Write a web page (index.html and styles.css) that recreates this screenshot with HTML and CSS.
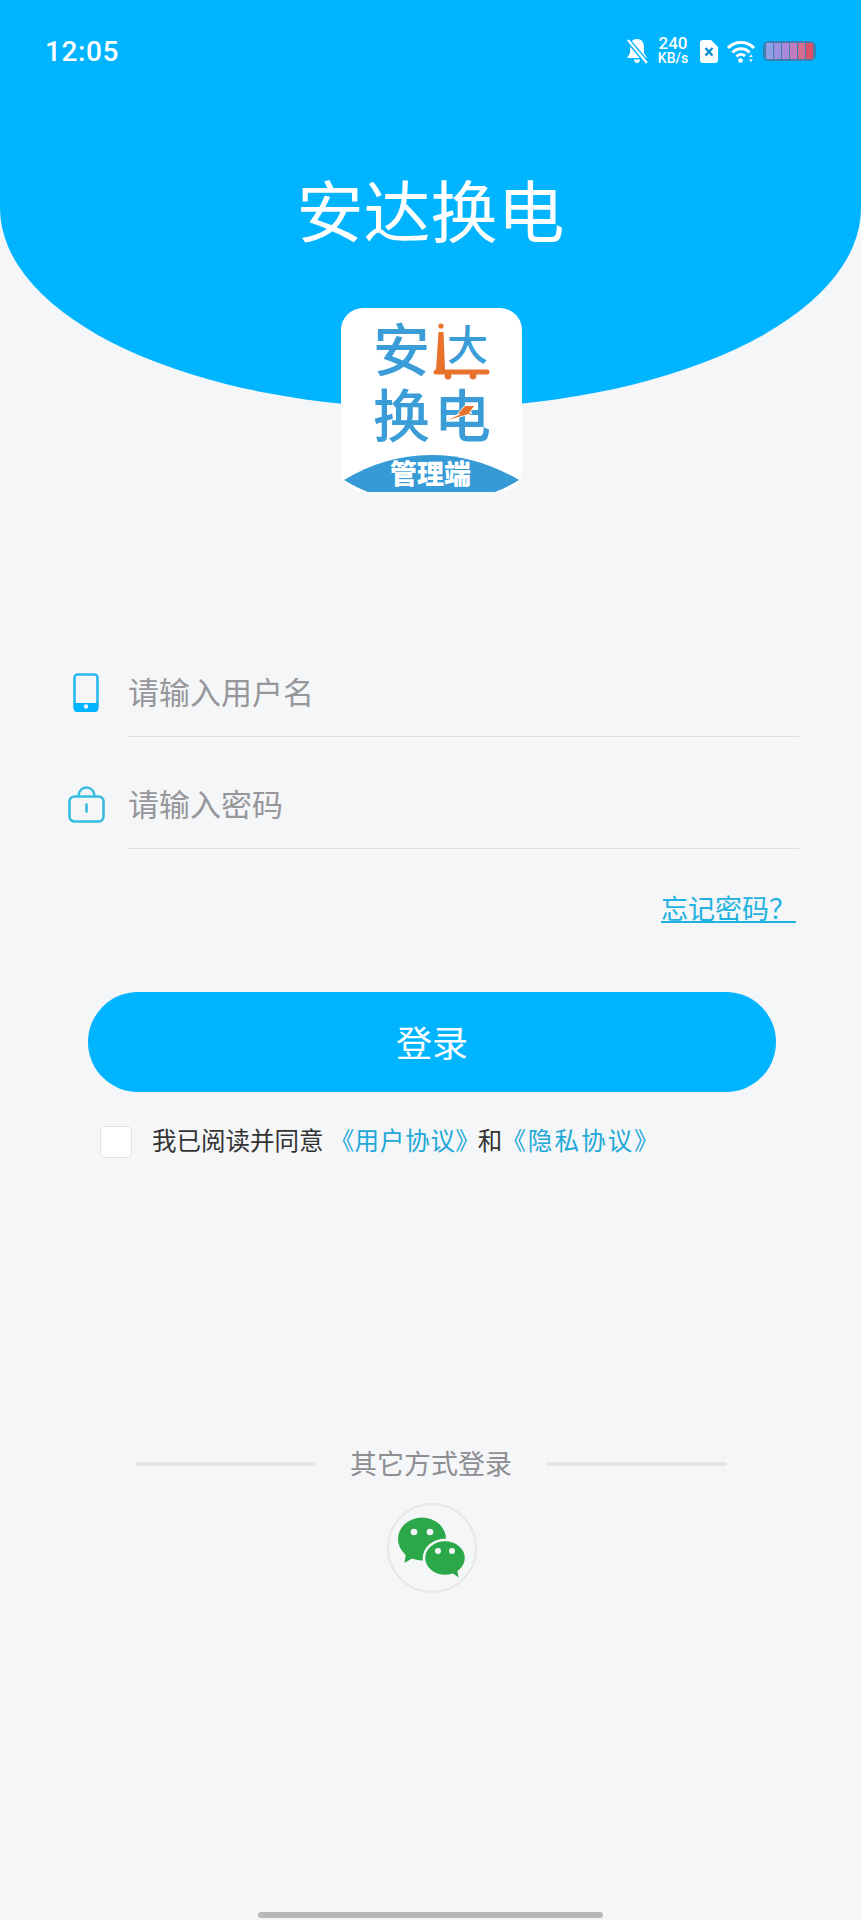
FILE: index.html
```html
<!DOCTYPE html>
<html lang="zh-CN">
<head>
    <meta charset="UTF-8">
    <meta name="viewport" content="width=device-width, initial-scale=1.0">
    <title>安达换电</title>
    <link rel="stylesheet" href="styles.css">
</head>
<body>
    <div class="header">
        <div class="status">
            <span class="time">12:05</span>
            <div class="status-icons">
                <svg class="ic-bell" width="22" height="26" viewBox="0 0 22 26">
                    <path d="M11 1c4.500 0 7 3.500 7 8v6l3 5H1l3-5V9c0-4.500 2.500-8 7-8z" fill="#fff"/>
                    <path d="M8 21.500h6c0 2-1.300 3.500-3 3.500s-3-1.500-3-3.500z" fill="#fff"/>
                    <path d="M1 1l20 24" stroke="#00b4ff" stroke-width="5"/>
                    <path d="M2 2l19 23" stroke="#fff" stroke-width="2.200"/>
                </svg>
                <div class="speed"><span>240</span><span>KB/s</span></div>
                <svg class="ic-sim" width="18" height="23" viewBox="0 0 18 23">
                    <path d="M3 0h8l7 7v13a3 3 0 0 1-3 3H3a3 3 0 0 1-3-3V3a3 3 0 0 1 3-3z" fill="#fff"/>
                    <path d="M5.500 8l7 7.500M12.500 8l-7 7.500" stroke="#0a8fd0" stroke-width="2.400"/>
                </svg>
                <svg class="ic-wifi" width="28" height="23" viewBox="0 0 28 23" fill="none" stroke="#fff" stroke-width="3">
                    <path d="M1 8c7-7.500 19-7.500 26 0"/>
                    <path d="M5.500 12.500c4.500-5 12.500-5 17 0"/>
                    <path d="M9.500 16.500c2.500-2.700 6-2.700 8.500-.5"/>
                    <circle cx="13.500" cy="20.500" r="2.300" fill="#fff" stroke="none"/>
                    <path d="M24 14.500l1.800 2.500h-3.600zM24 22l1.800-2.500h-3.600z" fill="#fff" stroke="none"/>
                </svg>
                <div class="battery">
                    <i class="cell c1"></i><i class="cell c2"></i><i class="cell c3"></i><i class="cell c4"></i><i class="cell c5"></i><i class="cell c6"></i>
                </div>
            </div>
        </div>
        <h1 class="title">安达换电</h1>
    </div>

    <div class="logo">
        <svg width="181" height="184" viewBox="0 0 181 184">
            <text class="logo-big" x="32" y="63" font-size="57">安</text>
            <text class="logo-big" x="106" y="52" font-size="41">大</text>
            <circle cx="100" cy="18" r="2.600" fill="#e8722c"/>
            <path d="M97.500 24h5l1.500 38h-9z" fill="#e8722c"/>
            <path d="M95 64h51" stroke="#e8722c" stroke-width="5" stroke-linecap="round"/>
            <circle cx="107" cy="68" r="3.400" fill="#e8722c"/>
            <circle cx="132" cy="68" r="3.400" fill="#e8722c"/>
            <text class="logo-big" x="32" y="129" font-size="57">换</text>
            <text class="logo-big" x="93" y="129" font-size="57">电</text>
            <path d="M124 98h9l-5 7h3l-24 7 13-6h-3z" fill="#e8722c" stroke="#fff" stroke-width="1.500" paint-order="stroke"/>
            <path d="M3 172C30 156 58 147 90 147s60 9 88 25c-8 5-16 9-24 12H27c-8-3-16-7-24-12z" fill="#359ad6"/>
            <text class="logo-tag" x="49" y="176" font-size="27">管理端</text>
        </svg>
    </div>

    <form class="login">
        <div class="field">
            <span class="field-icon">
                <svg width="26" height="39" viewBox="0 0 26 39">
                    <rect x="1.500" y="1.500" width="23" height="36" rx="3" fill="none" stroke="#2ab8ef" stroke-width="2.600"/>
                    <path d="M1 30h24v6a3 3 0 0 1-3 3H4a3 3 0 0 1-3-3z" fill="#00b4ff"/>
                    <circle cx="13" cy="33.500" r="2.200" fill="#f4f6f8"/>
                </svg>
            </span>
            <input class="field-input" type="text" placeholder="请输入用户名">
        </div>
        <div class="field">
            <span class="field-icon">
                <svg width="37" height="37" viewBox="0 0 37 37" fill="none" stroke="#35bce0" stroke-width="2.600">
                    <rect x="1.500" y="10.500" width="34" height="25" rx="5"/>
                    <path d="M10.500 10c.5-5.500 4-8.500 8-8.500s7.500 3 8 8.500"/>
                    <path d="M18.500 18.500v7" stroke-linecap="round"/>
                </svg>
            </span>
            <input class="field-input" type="password" placeholder="请输入密码">
        </div>

        <a class="forgot" href="#">忘记密码？</a>

        <button class="submit" type="button">登录</button>

        <label class="agree">
            <span class="check"></span>
            <span class="agree-text">我已阅读并同意<a class="doc" href="#">《用户协议》</a>和<a class="doc" href="#">《隐私协议》</a></span>
        </label>
    </form>

    <div class="other">
        <span class="other-line"></span>
        <span class="other-text">其它方式登录</span>
        <span class="other-line"></span>
    </div>

    <div class="wechat">
        <svg width="70" height="62" viewBox="0 0 70 62">
            <path d="M9 36l-1.500 10 9-5.500z" fill="#2ba84a"/>
            <ellipse cx="25" cy="22" rx="24" ry="21.500" fill="#2ba84a"/>
            <ellipse cx="48" cy="41" rx="21" ry="18" fill="#2ba84a" stroke="#f4f6f8" stroke-width="2.500"/>
            <path d="M54 55l7.500 5.500-1.500-9z" fill="#2ba84a"/>
            <circle cx="17" cy="15" r="3.300" fill="#f4f6f8"/>
            <circle cx="33" cy="15" r="3.300" fill="#f4f6f8"/>
            <circle cx="41" cy="34" r="3" fill="#f4f6f8"/>
            <circle cx="55" cy="34" r="3" fill="#f4f6f8"/>
        </svg>
    </div>

    <div class="home-bar"></div>
</body>
</html>
```

FILE: styles.css
```css
* {
    box-sizing: border-box;
}
body {
    margin: 0;
    height: 1920px;
    overflow: hidden;
    display: flex;
    flex-direction: column;
    background-color: #f4f6f8;
    font-family: "Liberation Sans", "Noto Sans CJK SC", sans-serif;
}

/* Header */
.header {
    height: 408px;
    background-color: #00b4ff;
    border-radius: 0 0 50% 50% / 0 0 200px 200px;
    color: #fff;
}
.status {
    display: flex;
    justify-content: space-between;
    align-items: center;
    height: 50px;
    margin-top: 26px;
    padding: 0 45px;
}
.status .time {
    font-family: Roboto, sans-serif;
    font-size: 28px;
    font-weight: 500;
    letter-spacing: 0.6px;
}
.status-icons {
    display: flex;
    align-items: center;
}
.ic-bell {
    margin-right: 9px;
}
.speed {
    display: flex;
    flex-direction: column;
    align-items: center;
    width: 32px;
    margin-right: 11px;
    font-family: Roboto, sans-serif;
    font-weight: 500;
    line-height: 15px;
}
.speed span:first-child {
    font-size: 17px;
}
.speed span:last-child {
    font-size: 14px;
}
.ic-sim {
    margin-right: 9px;
}
.ic-wifi {
    margin-right: 8px;
}
.battery {
    display: flex;
    width: 53px;
    height: 20px;
    padding: 2px 3px;
    gap: 1px;
    background-color: #3f7fb0;
    border-radius: 6px;
}
.battery .cell {
    flex: 1;
}
.battery .c1 { background-color: #8fa0e6; }
.battery .c2 { background-color: #9c90e0; }
.battery .c3 { background-color: #ae88d8; }
.battery .c4 { background-color: #c47cbc; }
.battery .c5 { background-color: #d46c94; }
.battery .c6 { background-color: #dc5068; }
.title {
    margin: 98px 0 0;
    font-size: 67px;
    font-weight: 400;
    line-height: 80px;
    text-align: center;
}

/* Logo */
.logo {
    width: 181px;
    height: 184px;
    margin: -100px 0 0 341px;
    background-color: #fff;
    border-radius: 22px;
}
.logo svg {
    display: block;
    overflow: visible;
}
.logo-big {
    fill: #3a9dd8;
    font-family: "Noto Sans CJK SC", sans-serif;
    font-weight: 500;
}
.logo-tag {
    fill: #fff;
    font-family: "Noto Sans CJK SC", sans-serif;
    font-weight: 900;
}

/* Form */
.login {
    padding: 155px 62px 0;
}
.field {
    display: flex;
    align-items: center;
    gap: 18px;
    margin-top: 22px;
}
.login .field:first-child {
    margin-top: 0;
}
.field-icon {
    display: flex;
    justify-content: center;
    width: 48px;
}
.field-input {
    flex: 1;
    height: 90px;
    padding: 0 0 2px;
    border: 0;
    border-bottom: 1px solid #dcdee1;
    outline: none;
    background: transparent;
    font-family: "Noto Sans CJK SC", sans-serif;
    font-size: 31px;
}
.field-input::placeholder {
    color: #97979b;
    opacity: 1;
}
.forgot {
    display: block;
    width: 135px;
    margin: 41px 3px 0 auto;
    color: #1fb2e0;
    font-size: 27px;
    line-height: 40px;
}
.submit {
    display: block;
    width: 688px;
    height: 100px;
    margin: 62px 0 0 26px;
    padding: 0 0 2px;
    border: 0;
    border-radius: 50px;
    background-color: #00b4ff;
    color: #fff;
    font-family: "Noto Sans CJK SC", sans-serif;
    font-size: 36px;
}
.agree {
    display: flex;
    align-items: center;
    gap: 20px;
    margin: 34px 0 0 38px;
}
.check {
    width: 32px;
    height: 32px;
    background-color: #fff;
    border: 1px solid #dfe1e4;
    border-radius: 5px;
}
.agree-text {
    color: #333;
    font-size: 24.5px;
    line-height: 32px;
    white-space: nowrap;
}
.doc {
    margin: 0 9px 0 18px;
    color: #1fa8d8;
    font-feature-settings: "palt";
    letter-spacing: 0.8px;
    text-decoration: none;
}
.doc + .doc {
    margin-left: 11px;
    letter-spacing: 2.2px;
}

/* Other login */
.other {
    display: flex;
    align-items: center;
    height: 36px;
    margin: 288px 0 0 135px;
}
.other-line {
    width: 181px;
    height: 4px;
    background-color: #e3e5e8;
    border-radius: 2px;
}
.other-text {
    margin: 0 34px 3px;
    color: #8e8e93;
    font-size: 27px;
    white-space: nowrap;
}
.wechat {
    display: flex;
    align-items: center;
    justify-content: center;
    width: 90px;
    height: 90px;
    margin: 21px 0 0 387px;
    border: 2px solid #e6e7e9;
    border-radius: 50%;
}
.wechat svg {
    display: block;
}
.home-bar {
    width: 345px;
    height: 6px;
    margin: auto 0 2px 258px;
    background-color: #b8b8b8;
    border-radius: 3px;
}
```
